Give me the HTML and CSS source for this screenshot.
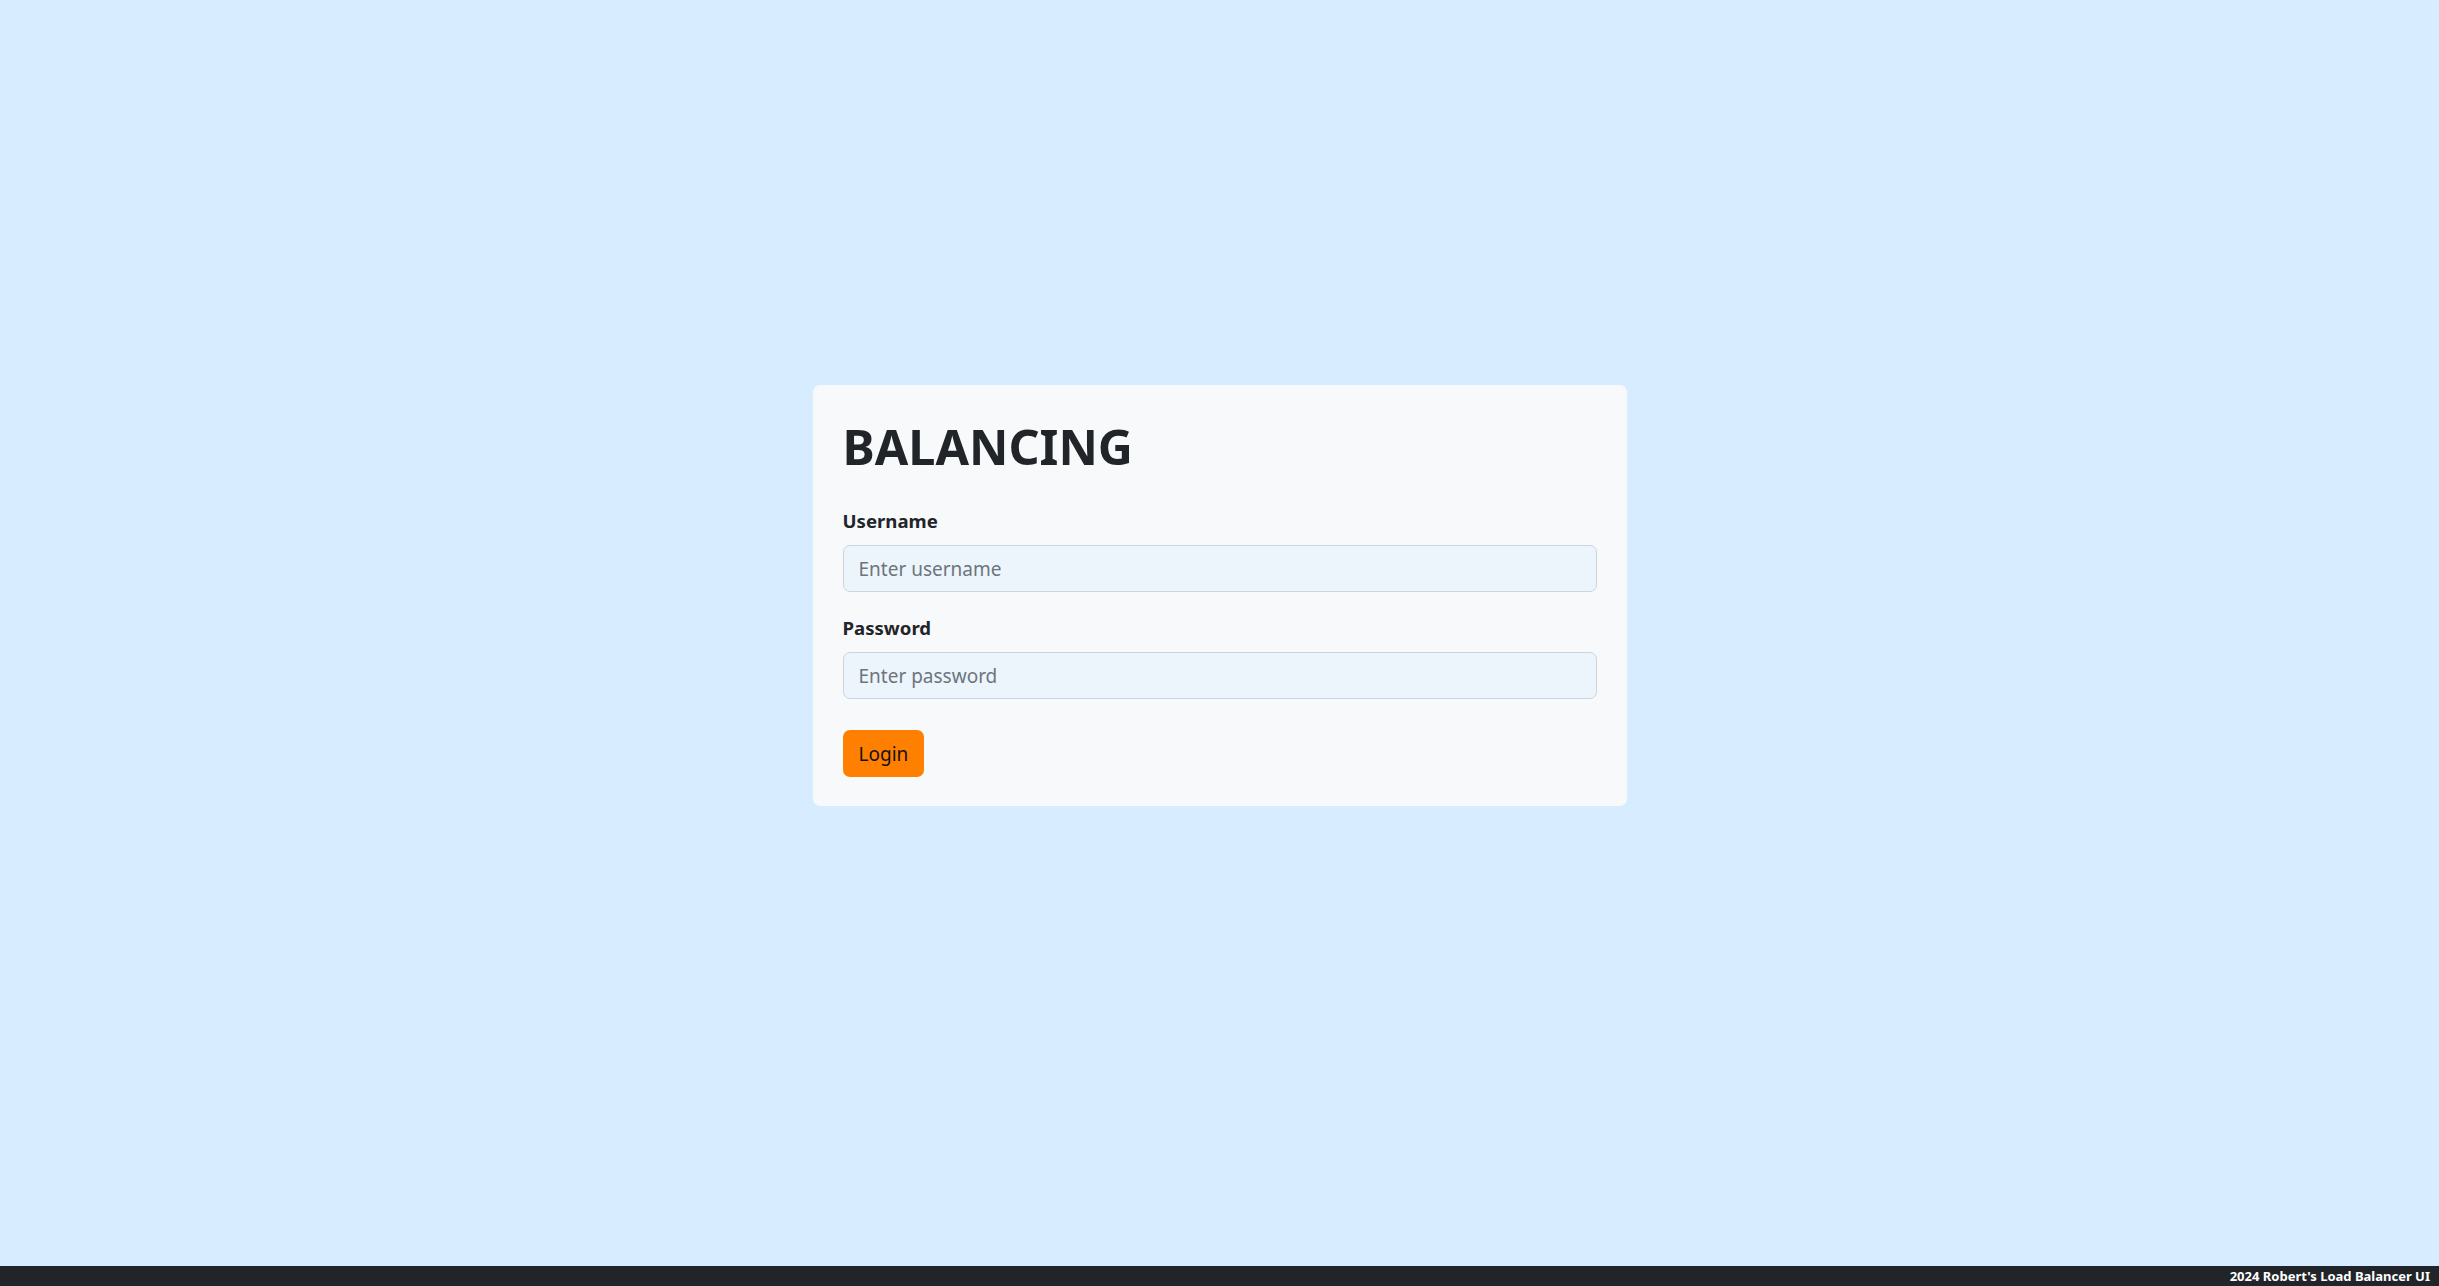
FILE: index.html
```html
<!DOCTYPE html>
<html lang="en">
<head>
<meta charset="utf-8">
<title>Balancing - Login</title>
<link rel="stylesheet" href="styles.css">
</head>
<body>
<main class="page">
  <form class="card">
    <h1 class="title">BALANCING</h1>
    <div class="group">
      <label class="label" for="username">Username</label>
      <input class="field" id="username" type="text" placeholder="Enter username">
    </div>
    <div class="group group-last">
      <label class="label" for="password">Password</label>
      <input class="field" id="password" type="password" placeholder="Enter password">
    </div>
    <button class="btn" type="button">Login</button>
  </form>
</main>
<footer class="footer">2024 Robert's Load Balancer UI</footer>
</body>
</html>
```

FILE: styles.css
```css
* { box-sizing: border-box; }
html, body { height: 100%; }
body {
  margin: 0;
  background: #d7ecff;
  font-family: "Noto Sans", "Open Sans", sans-serif;
  color: #212529;
  display: flex;
  flex-direction: column;
}
.page {
  flex: 1;
  display: flex;
  justify-content: center;
  align-items: flex-start;
  padding-top: 385px;
}
.card {
  width: 814px;
  background: #f8f9fa;
  border-radius: 7px;
  padding: 31px 30px 29px 30px;
}
.title {
  margin: 0 0 30px 0;
  font-size: 48.5px;
  line-height: 60px;
  font-weight: 700;
  color: #212529;
}
.group { margin-bottom: 21px; }
.group-last { margin-bottom: 31px; }
.label {
  display: block;
  font-size: 18.6px;
  line-height: 30px;
  font-weight: 700;
  margin-bottom: 9px;
}
.field {
  display: block;
  width: 100%;
  height: 47px;
  padding: 0 15px;
  font-family: inherit;
  font-size: 19px;
  color: #212529;
  background: #ecf4fc;
  border: 1px solid #ced4da;
  border-radius: 7px;
}
.field::placeholder { color: #6c757d; }
.btn {
  display: block;
  height: 47px;
  padding: 0 16px;
  font-family: inherit;
  font-size: 19px;
  color: #111;
  background: #ff8000;
  border: none;
  border-radius: 7px;
}
.footer {
  height: 20px;
  background: #212529;
  color: #fff;
  font-size: 13px;
  font-weight: 700;
  line-height: 20px;
  text-align: right;
  padding-right: 9px;
}
```
